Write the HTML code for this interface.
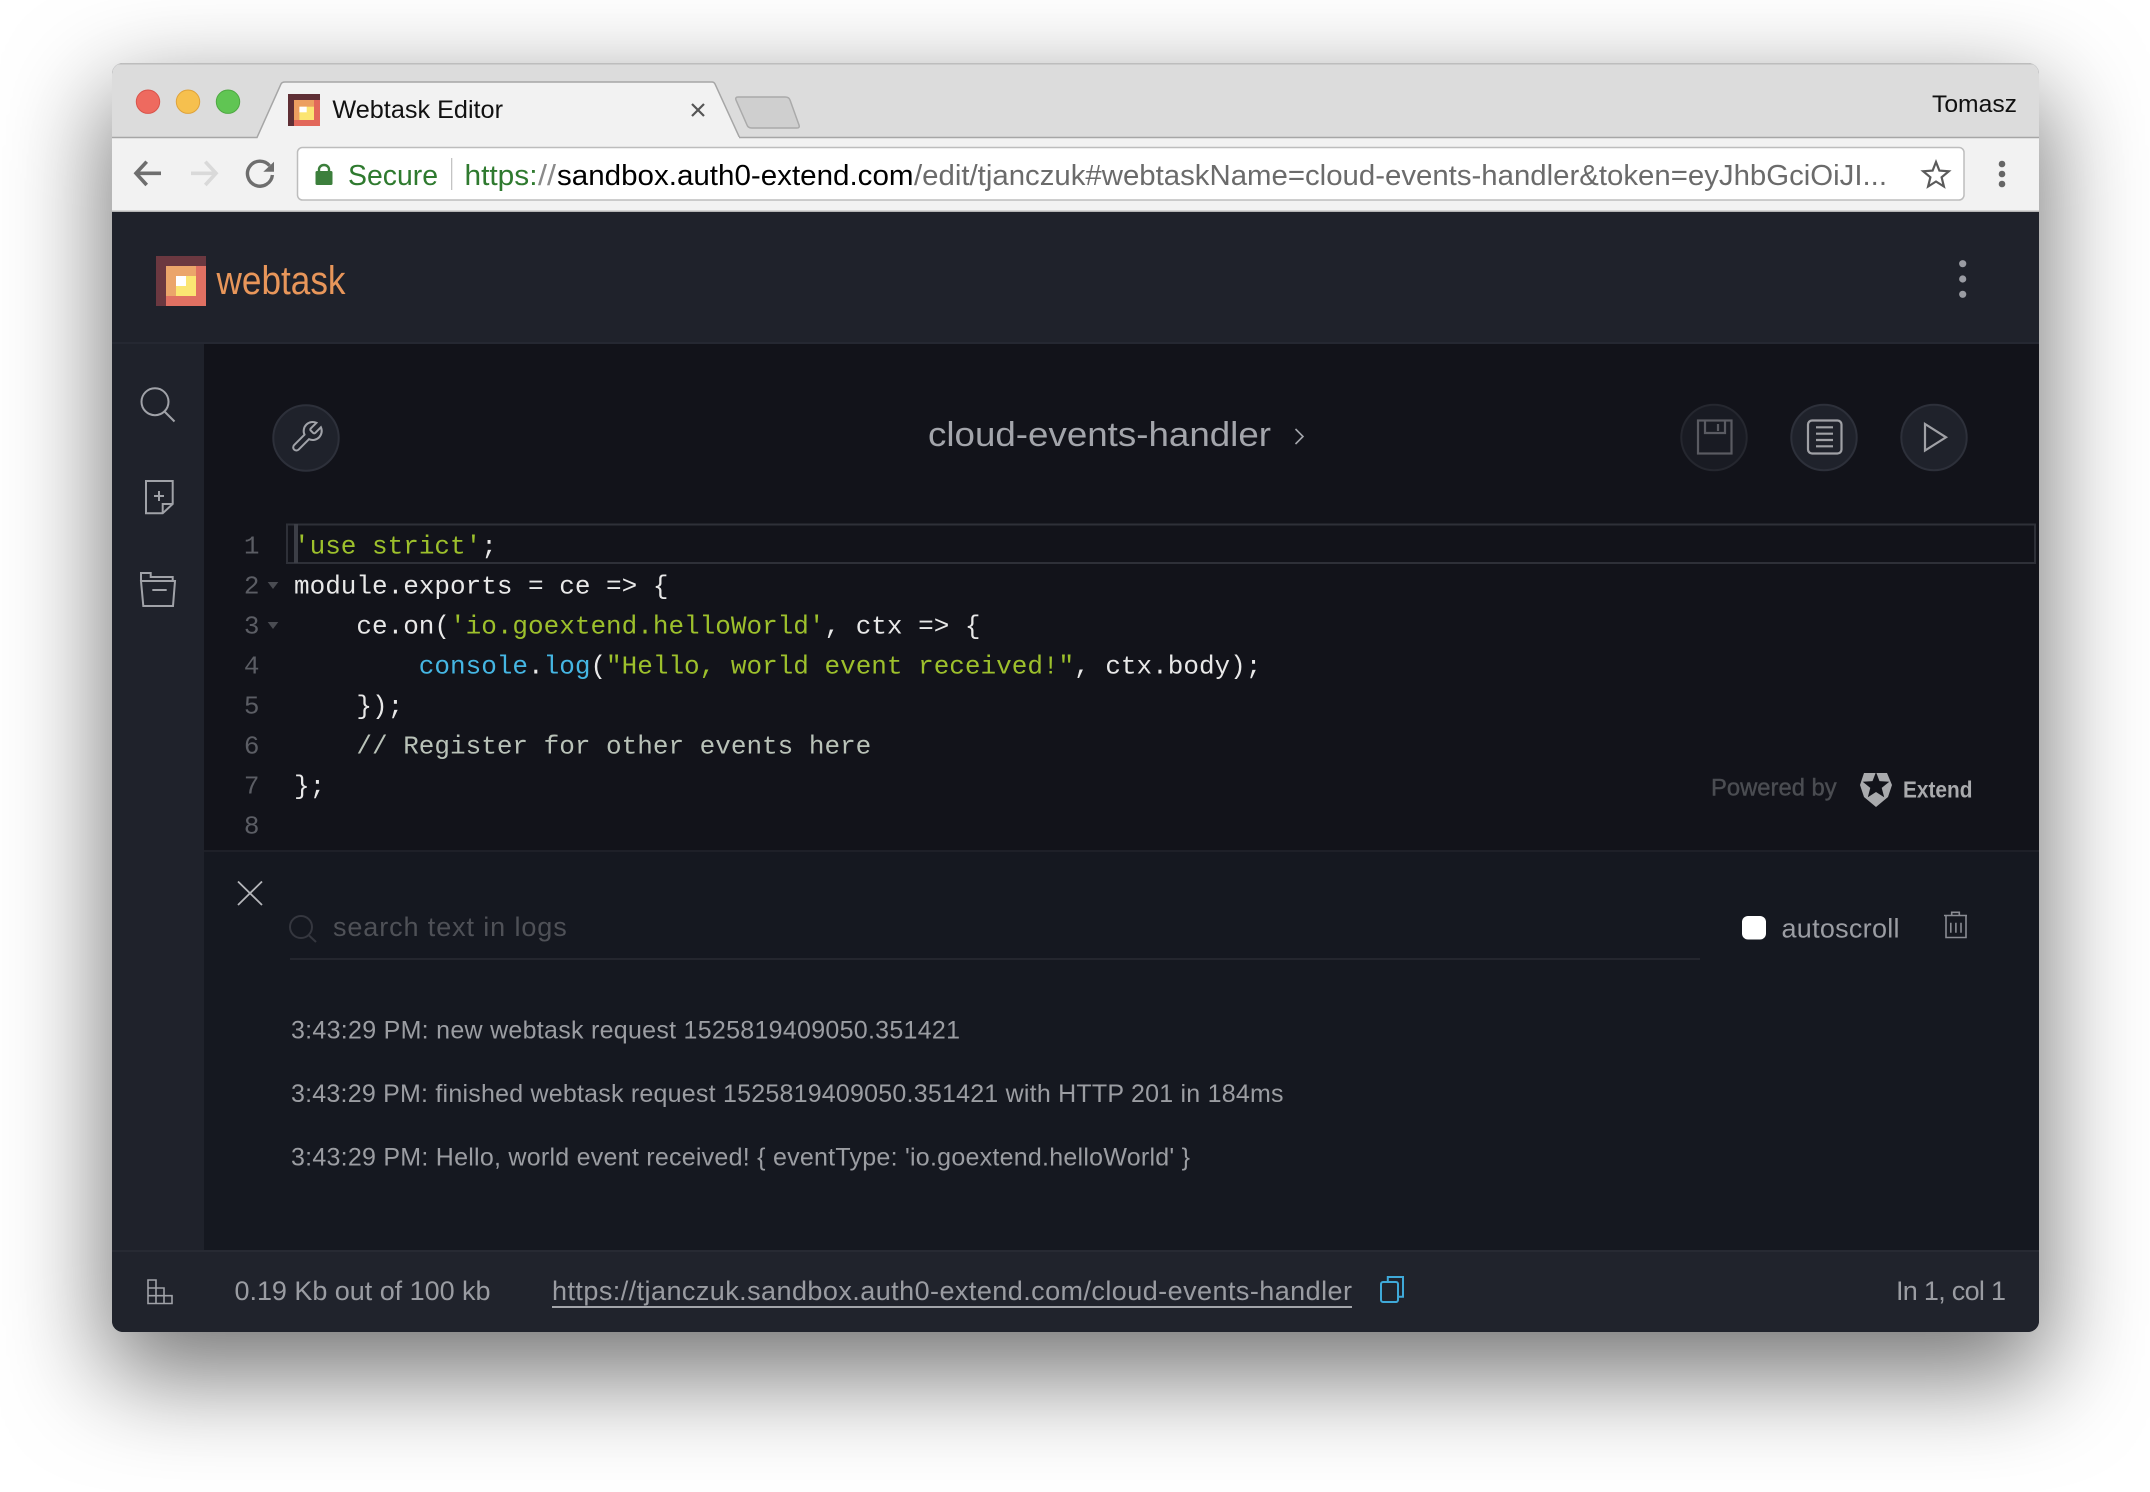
<!DOCTYPE html>
<html lang="en">
<head>
<meta charset="utf-8">
<title>Webtask Editor</title>
<style>
html,body{margin:0;padding:0;background:#fff;width:2150px;height:1492px;overflow:hidden}
#win{position:absolute;left:112px;top:63px;width:1927px;height:1269px;border-radius:11px;background:#20232c;box-shadow:0 38px 100px 6px rgba(0,0,0,.54)}
svg{position:absolute;left:0;top:0}
text{font-family:"Liberation Sans",sans-serif}
.m{font-family:"Liberation Mono",monospace;font-size:26px}
</style>
</head>
<body>
<div id="win"></div>
<svg width="2150" height="1492" viewBox="0 0 2150 1492" xmlns="http://www.w3.org/2000/svg">
<defs><clipPath id="c"><rect x="112" y="63" width="1927" height="1269" rx="11"/></clipPath></defs>
<g clip-path="url(#c)">
  <!-- chrome -->
  <rect x="112" y="63" width="1927" height="75" fill="#dcdcdc"/>
  <rect x="112" y="137" width="1927" height="75" fill="#f2f2f2"/>
  <rect x="112" y="63" width="1927" height="1.5" fill="#bdbdbd"/>
  <path d="M112 137.5H257L281 84Q282 82 285 82H712Q714 82 715 84L739.5 137.5H2039" fill="#f2f2f2" stroke="#a6a6a6" stroke-width="1.5"/>
  <rect x="259" y="137" width="480" height="3" fill="#f2f2f2"/>
  <path d="M738 97H785Q789 97 790 100L799 125Q800 128 797 128H752Q748 128 747 125L736 100Q735 97 738 97Z" fill="#cfcfcf" stroke="#aaa" stroke-width="1.5"/>
  <rect x="112" y="210.5" width="1927" height="1.5" fill="#b5b5b5"/>

  <!-- traffic lights -->
  <circle cx="148" cy="101.7" r="11.7" fill="#ee6a5f" stroke="#d9534a" stroke-width="1"/>
  <circle cx="188" cy="101.7" r="11.7" fill="#f6c04e" stroke="#dfa23a" stroke-width="1"/>
  <circle cx="228" cy="101.7" r="11.7" fill="#60c553" stroke="#4ea842" stroke-width="1"/>

  <!-- favicon -->
  <rect x="288" y="94" width="32" height="32" fill="#5f2f35"/>
  <rect x="294" y="100" width="26" height="26" fill="#e2685a"/>
  <rect x="294" y="100" width="20" height="20" fill="#ec9f60"/>
  <rect x="299.4" y="106.7" width="14.6" height="13.3" fill="#fbe572"/>
  <rect x="299.4" y="106.7" width="7.3" height="5.6" fill="#fff"/>
  <text x="332.4" y="118" font-size="25" fill="#111" textLength="170.6" lengthAdjust="spacingAndGlyphs">Webtask Editor</text>
  <path d="M692 104L704 116M704 104L692 116" stroke="#555" stroke-width="2.2" fill="none"/>
  <text x="1932" y="112" font-size="24" fill="#111" textLength="85" lengthAdjust="spacingAndGlyphs">Tomasz</text>

  <!-- nav -->
  <path d="M161 173.3H137M146.7 161.7L136 173.3L146.7 185" stroke="#6e6e6e" stroke-width="3.6" fill="none"/>
  <path d="M191 173.3H215M205.3 161.7L216 173.3L205.3 185" stroke="#d9d9d9" stroke-width="3.6" fill="none"/>
  <path d="M269.6 165.7A12.5 12.5 0 1 0 272.4 175" stroke="#6e6e6e" stroke-width="3.4" fill="none"/>
  <path d="M274 161.7V171.7H263.3Z" fill="#6e6e6e"/>

  <!-- omnibox -->
  <rect x="297.5" y="147.5" width="1666.5" height="52.5" rx="5" fill="#fff" stroke="#bdbdbd" stroke-width="1.5"/>
  <path d="M319 172V169.5A5 4.5 0 0 1 329 169.5V172" stroke="#3c7f3c" stroke-width="2.4" fill="none"/>
  <rect x="315.5" y="171" width="17" height="14" rx="1.5" fill="#3c7f3c"/>
  <text x="348" y="185" font-size="29" fill="#2f7a2f" textLength="90" lengthAdjust="spacingAndGlyphs">Secure</text>
  <rect x="451" y="158" width="1.3" height="32" fill="#c4c4c4"/>
  <text x="464.5" y="185" font-size="29" fill="#2f7a2f" textLength="73" lengthAdjust="spacingAndGlyphs">https:</text>
  <text x="538" y="185" font-size="29" fill="#8a8a8a" textLength="18" lengthAdjust="spacingAndGlyphs">//</text>
  <text x="557" y="185" font-size="29" fill="#000" textLength="356.5" lengthAdjust="spacingAndGlyphs">sandbox.auth0-extend.com</text>
  <text x="914" y="185" font-size="29" fill="#6b6b6b" textLength="973" lengthAdjust="spacingAndGlyphs">/edit/tjanczuk#webtaskName=cloud-events-handler&amp;token=eyJhbGciOiJI...</text>
  <polygon points="1936,162 1939.4,170.6 1948.8,171.3 1941.6,177.3 1943.9,186.5 1936,181.5 1928.1,186.5 1930.4,177.3 1923.2,171.3 1932.6,170.6" fill="none" stroke="#5a5a5a" stroke-width="2.2"/>
  <circle cx="2002" cy="164" r="3.3" fill="#666"/><circle cx="2002" cy="174" r="3.3" fill="#666"/><circle cx="2002" cy="184" r="3.3" fill="#666"/>

  <!-- header -->
  <rect x="112" y="212" width="1927" height="132" fill="#1f222b"/>
  <rect x="112" y="342" width="1927" height="2" fill="#252832"/>
  <rect x="156" y="256" width="50" height="50" fill="#6b3840"/>
  <rect x="166" y="266" width="40" height="40" fill="#e07062"/>
  <rect x="166" y="266" width="30" height="30" fill="#eba56a"/>
  <rect x="176" y="276" width="20" height="20" fill="#fbe572"/>
  <rect x="176" y="276" width="10" height="10" fill="#fff"/>
  <text x="216.5" y="294" font-size="40" fill="#e8965a" textLength="129" lengthAdjust="spacingAndGlyphs">webtask</text>
  <circle cx="1962.7" cy="263.7" r="3.6" fill="#9a9ca3"/><circle cx="1962.7" cy="279" r="3.6" fill="#9a9ca3"/><circle cx="1962.7" cy="294.3" r="3.6" fill="#9a9ca3"/>

  <!-- left rail -->
  <rect x="112" y="344" width="92" height="906" fill="#1f222b"/>
  <g fill="none" stroke="#a0a2a8" stroke-width="2">
    <circle cx="155" cy="401.7" r="13.5"/>
    <path d="M164.5 411.5L174.5 421.5"/>
    <path d="M146 481H172.7V504L162.7 513.3H146Z"/>
    <path d="M172.7 504H162.7V513.3"/>
    <path d="M154 496H164M159 491V501"/>
    <path d="M141 581H175L173 606H143.3Z"/>
    <path d="M141 581V573H150.7V577H172.7V581"/>
    <path d="M152.3 590H166.7"/>
  </g>

  <!-- editor -->
  <rect x="204" y="344" width="1835" height="506" fill="#12131a"/>
  <circle cx="306" cy="438" r="32.7" fill="#1f222b" stroke="#2d303a" stroke-width="2"/>
  <g transform="translate(288.7 419) scale(1.5)"><path d="M14.7 6.3a1 1 0 0 0 0 1.4l1.6 1.6a1 1 0 0 0 1.4 0l3.77-3.77a6 6 0 0 1-7.94 7.94l-6.91 6.91a2.12 2.12 0 0 1-3-3l6.91-6.91a6 6 0 0 1 7.94-7.94l-3.76 3.76z" fill="none" stroke="#a0a2a8" stroke-width="1.35"/></g>
  <text x="928" y="446" font-size="34" fill="#a3a5ab" textLength="343" lengthAdjust="spacingAndGlyphs">cloud-events-handler</text>
  <path d="M1295.5 429L1303 436.5L1295.5 444" fill="none" stroke="#a3a5ab" stroke-width="1.6"/>

  <circle cx="1714" cy="437.5" r="32.7" fill="#191b23" stroke="#25272f" stroke-width="2"/>
  <g fill="none" stroke="#5a5b62" stroke-width="2.2">
    <rect x="1698" y="420.5" width="33.5" height="33"/>
    <path d="M1705 420.5V433H1725V420.5"/>
    <path d="M1718 424V431"/>
  </g>
  <circle cx="1824" cy="437.5" r="32.7" fill="#1f222b" stroke="#2d303a" stroke-width="2"/>
  <g fill="none" stroke="#a0a1a6" stroke-width="2.2">
    <rect x="1808" y="420.5" width="33.5" height="33" rx="4"/>
    <path d="M1816 427.3H1833M1816 433.7H1833M1816 440H1833M1816 446.3H1833"/>
  </g>
  <circle cx="1934" cy="437.5" r="32.7" fill="#1f222b" stroke="#2d303a" stroke-width="2"/>
  <path d="M1925 424V450.5L1946 437.3Z" fill="none" stroke="#a0a1a6" stroke-width="2.2"/>

  <!-- code -->
  <rect x="287" y="524.5" width="1748" height="38.5" fill="none" stroke="#2e3038" stroke-width="2"/>
  <rect x="294" y="524" width="4" height="39" fill="#3c3e46"/>
  <g fill="#5b5d64" text-anchor="end">
    <text class="m" x="259.5" y="553.3">1</text>
    <text class="m" x="259.5" y="593.3">2</text>
    <text class="m" x="259.5" y="633.3">3</text>
    <text class="m" x="259.5" y="673.3">4</text>
    <text class="m" x="259.5" y="713.3">5</text>
    <text class="m" x="259.5" y="753.3">6</text>
    <text class="m" x="259.5" y="793.3">7</text>
    <text class="m" x="259.5" y="833.3">8</text>
  </g>
  <path d="M267.7 582H278.3L273 589Z" fill="#4a4c52"/>
  <path d="M267.7 622H278.3L273 629Z" fill="#4a4c52"/>
  <text class="m" x="294" y="553.3" xml:space="preserve" fill="#e8e8e8"><tspan fill="#9dc02c">'use strict'</tspan>;</text>
  <text class="m" x="294" y="593.3" xml:space="preserve" fill="#e8e8e8">module.exports = ce =&gt; {</text>
  <text class="m" x="356.4" y="633.3" xml:space="preserve" fill="#e8e8e8">ce.on(<tspan fill="#9dc02c">'io.goextend.helloWorld'</tspan>, ctx =&gt; {</text>
  <text class="m" x="418.8" y="673.3" xml:space="preserve" fill="#e8e8e8"><tspan fill="#45b6e3">console</tspan>.<tspan fill="#45b6e3">log</tspan>(<tspan fill="#9dc02c">"Hello, world event received!"</tspan>, ctx.body);</text>
  <text class="m" x="356.4" y="713.3" xml:space="preserve" fill="#e8e8e8">});</text>
  <text class="m" x="356.4" y="753.3" xml:space="preserve" fill="#b9c2b8">// Register for other events here</text>
  <text class="m" x="294" y="793.3" xml:space="preserve" fill="#e8e8e8">};</text>

  <!-- powered by -->
  <text x="1711" y="795.7" font-size="24" fill="#4b4d52" stroke="#4b4d52" stroke-width=".4" textLength="125.7" lengthAdjust="spacingAndGlyphs">Powered by</text>
  <polygon points="1864,773 1887,773 1892,785 1888,797 1876,807 1864,797 1860,785" fill="#a9aaad"/>
  <polygon points="1876,772 1879.5,781.1 1889.3,781.7 1881.7,787.9 1884.2,797.3 1876,792 1867.8,797.3 1870.3,787.9 1862.7,781.7 1872.5,781.1" fill="#12131a"/>
  <text x="1903" y="797.7" font-size="23" font-weight="bold" fill="#a9aaad" textLength="69.5" lengthAdjust="spacingAndGlyphs">Extend</text>

  <!-- logs -->
  <rect x="204" y="850" width="1835" height="400" fill="#151820"/>
  <rect x="204" y="850" width="1835" height="2" fill="#1e2028"/>
  <path d="M238 881.5L262 905M262 881.5L238 905" stroke="#b5b6ba" stroke-width="1.8" fill="none"/>
  <circle cx="301" cy="927" r="11" fill="none" stroke="#35373f" stroke-width="2"/>
  <path d="M308.5 935L316 942" stroke="#35373f" stroke-width="2" fill="none"/>
  <text x="333" y="936" font-size="27" fill="#4f5157" textLength="233.7" lengthAdjust="spacing">search text in logs</text>
  <rect x="290" y="958" width="1410" height="2" fill="#24262e"/>
  <rect x="1742" y="916" width="24" height="23.5" rx="6" fill="#fff"/>
  <text x="1781.5" y="937.7" font-size="27" fill="#9b9da3" textLength="118" lengthAdjust="spacing">autoscroll</text>
  <g fill="none" stroke="#8a8c93" stroke-width="1.6">
    <path d="M1946 916V937.5H1966V916"/>
    <path d="M1944 915.5H1967"/>
    <path d="M1951.7 915.5V912.3H1959.3V915.5"/>
    <path d="M1950.8 922.7V932.7M1955.9 922.7V932.7M1961 922.7V932.7"/>
  </g>
  <g font-size="25" fill="#9b9da2">
    <text x="291" y="1038.3" textLength="669" lengthAdjust="spacing">3:43:29 PM: new webtask request 1525819409050.351421</text>
    <text x="291" y="1102" textLength="992.5" lengthAdjust="spacing">3:43:29 PM: finished webtask request 1525819409050.351421 with HTTP 201 in 184ms</text>
    <text x="291" y="1165.7" textLength="899" lengthAdjust="spacing">3:43:29 PM: Hello, world event received! { eventType: 'io.goextend.helloWorld' }</text>
  </g>

  <!-- footer -->
  <rect x="112" y="1250" width="1927" height="82" fill="#20232c"/>
  <rect x="112" y="1250" width="1927" height="2" fill="#272a33"/>
  <g fill="none" stroke="#a0a2a8" stroke-width="1.6">
    <path d="M148 1280H156V1303.5H148ZM148 1288H164V1303.5H156M148 1295.7H172V1303.5H164V1288"/>
  </g>
  <text x="234.5" y="1300" font-size="27" fill="#9a9ca2" textLength="256" lengthAdjust="spacing">0.19 Kb out of 100 kb</text>
  <text x="552" y="1300" font-size="27" fill="#9a9ca2" textLength="800" lengthAdjust="spacing">https://tjanczuk.sandbox.auth0-extend.com/cloud-events-handler</text>
  <rect x="552" y="1306" width="800" height="2" fill="#a3a5aa"/>
  <g fill="none" stroke="#3fa9d9" stroke-width="2">
    <rect x="1381" y="1282" width="17" height="20" rx="2"/>
    <path d="M1387.8 1282V1277H1403V1296.7H1399"/>
  </g>
  <text x="1896" y="1300" font-size="27" fill="#9a9ca2" textLength="110" lengthAdjust="spacing">In 1, col 1</text>
</g>
</svg>
</body>
</html>
